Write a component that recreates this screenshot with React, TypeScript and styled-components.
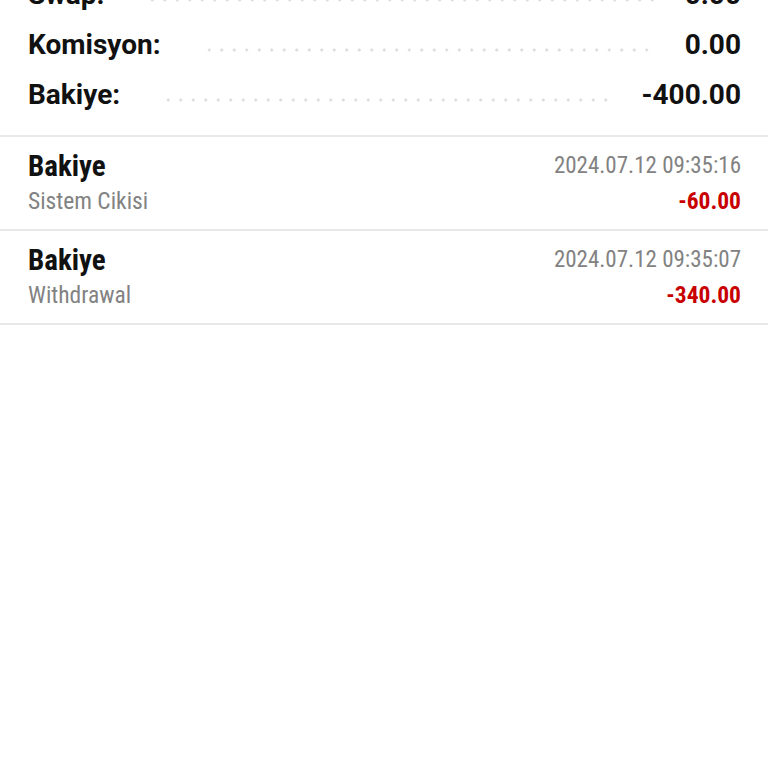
import styled, {createGlobalStyle} from "styled-components";

const GlobalStyle = createGlobalStyle`
    html, body {
        margin: 0;
        padding: 0;
        background: #ffffff;
        font-family: Roboto, "Liberation Sans", sans-serif;
    }
`

type Summary = { label: string; value: string }
type Entry = { title: string; note: string; date: string; amount: string }

const summary: Summary[] = [
    {label: "Swap:", value: "0.00"},
    {label: "Komisyon:", value: "0.00"},
    {label: "Bakiye:", value: "-400.00"},
]

const entries: Entry[] = [
    {title: "Bakiye", note: "Sistem Cikisi", date: "2024.07.12 09:35:16", amount: "-60.00"},
    {title: "Bakiye", note: "Withdrawal", date: "2024.07.12 09:35:07", amount: "-340.00"},
]

export default function App() {
    return (
        <>
            <GlobalStyle/>
            <Page>
                <SummaryBlock>
                    {summary.map((s) => (
                        <SummaryRow key={s.label}>
                            <SummaryLabel>{s.label}</SummaryLabel>
                            <Leader/>
                            <SummaryValue>{s.value}</SummaryValue>
                        </SummaryRow>
                    ))}
                </SummaryBlock>
                <List>
                    {entries.map((e) => (
                        <Item key={e.date}>
                            <Column>
                                <Title>{e.title}</Title>
                                <Note>{e.note}</Note>
                            </Column>
                            <Column $right>
                                <DateText>{e.date}</DateText>
                                <Amount>{e.amount}</Amount>
                            </Column>
                        </Item>
                    ))}
                </List>
            </Page>
        </>
    );
}

// the screen is scrolled a little, so the first row is cut at the top
const Page = styled.div`
    margin-top: -31px;
    width: 768px;
    min-height: 799px;
    background: #ffffff;
`

const SummaryBlock = styled.section`
    padding: 0 27px 16px 28px;
    border-bottom: 2px solid #e8e8e8;
`

const SummaryRow = styled.div`
    display: flex;
    align-items: center;
    height: 50px;
`

const SummaryLabel = styled.span`
    font-size: 28px;
    font-weight: 700;
    color: #111111;
    white-space: nowrap;
`

const Leader = styled.span`
    flex: 1;
    height: 4px;
    margin: 12px 29px 0 42px;
    background-image: radial-gradient(circle, #dedede 1.4px, transparent 1.8px);
    background-size: 12.5px 4px;
    background-repeat: repeat-x;
`

const SummaryValue = styled.span`
    font-size: 28px;
    font-weight: 700;
    color: #111111;
    white-space: nowrap;
`

const List = styled.section`
    display: flex;
    flex-direction: column;
`

const Item = styled.div`
    display: flex;
    justify-content: space-between;
    padding: 12px 27px 10px 28px;
    border-bottom: 2px solid #e8e8e8;
    font-stretch: 80%;
`

const Column = styled.div<{ $right?: boolean }>`
    display: flex;
    flex-direction: column;
    align-items: ${(p) => (p.$right ? "flex-end" : "flex-start")};
`

const Title = styled.span`
    font-size: 29px;
    line-height: 34px;
    font-weight: 700;
    color: #111111;
`

const Note = styled.span`
    font-size: 23.5px;
    line-height: 36px;
    color: #828282;
`

const DateText = styled.span`
    font-size: 23px;
    line-height: 34px;
    color: #828282;
`

const Amount = styled.span`
    font-size: 23.5px;
    line-height: 36px;
    font-weight: 700;
    color: #c80000;
`
